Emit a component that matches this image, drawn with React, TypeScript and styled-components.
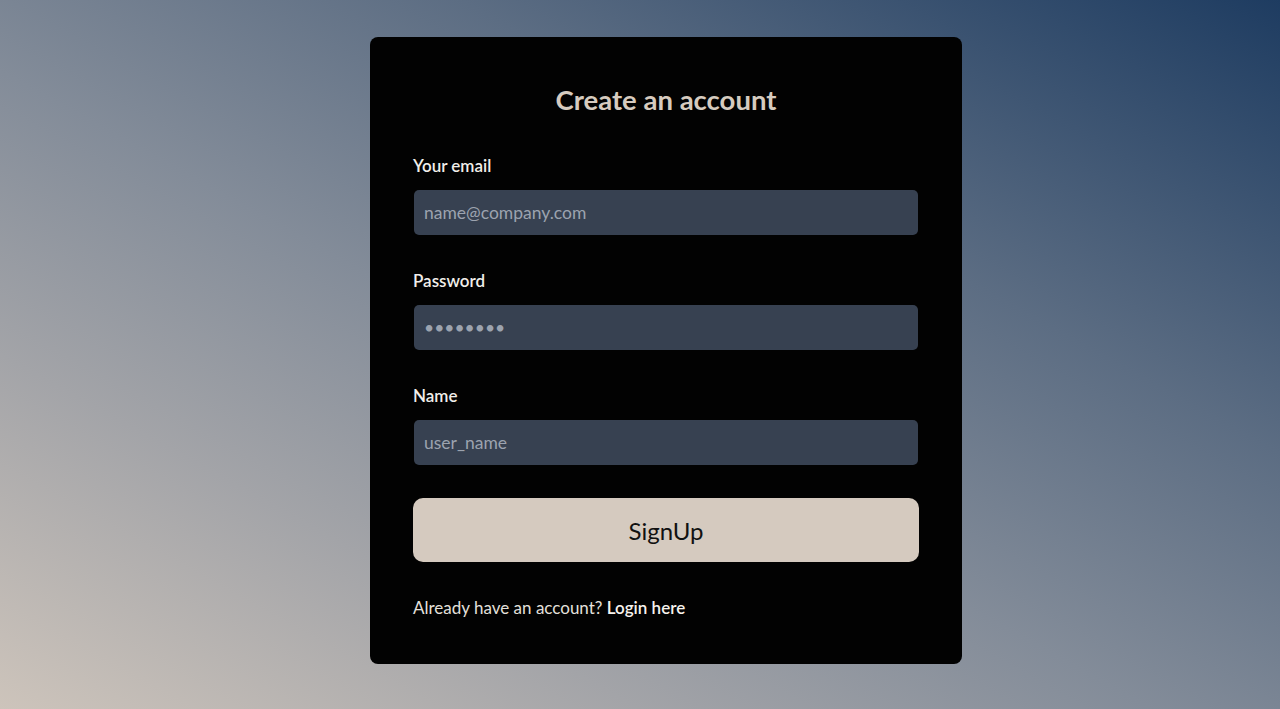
import React from 'react';
import styled, { createGlobalStyle } from 'styled-components';

const GlobalStyle = createGlobalStyle`
  * {
    box-sizing: border-box;
  }
  body {
    margin: 0;
    font-family: Lato, 'Open Sans', sans-serif;
  }
`;

interface FieldProps {
  label: string;
  type: string;
  placeholder: string;
}

const Field: React.FC<FieldProps> = ({ label, type, placeholder }) => {
  return (
    <FieldWrap>
      <Label>{label}</Label>
      <Input type={type} placeholder={placeholder} />
    </FieldWrap>
  );
};

export default function App() {
  return (
    <>
      <GlobalStyle />
      <Page>
        <Card>
          <Title>Create an account</Title>
          <Form onSubmit={(e) => e.preventDefault()}>
            <Field label="Your email" type="email" placeholder="name@company.com" />
            <Field label="Password" type="password" placeholder="••••••••" />
            <Field label="Name" type="text" placeholder="user_name" />
            <SubmitButton type="submit">SignUp</SubmitButton>
          </Form>
          <Footer>
            Already have an account? <LoginLink href="#">Login here</LoginLink>
          </Footer>
        </Card>
      </Page>
    </>
  );
}

const Page = styled.div`
  min-height: 100vh;
  width: 100%;
  display: flex;
  justify-content: center;
  align-items: flex-start;
  padding: 37px 0 0 52px;
  background: linear-gradient(
    to top right,
    #cdc4bb 0%,
    #a3a4a8 25%,
    #838c99 45%,
    #5c6d83 68%,
    #1e3c61 100%
  );
`;

const Card = styled.div`
  width: 592px;
  background: #020202;
  border-radius: 8px;
  padding: 46px 43px 46px 43px;
  display: flex;
  flex-direction: column;
`;

const Title = styled.h1`
  margin: 0 0 38px;
  text-align: center;
  font-size: 27.5px;
  line-height: 34px;
  font-weight: 700;
  color: #d6cbbf;
`;

const Form = styled.form`
  display: flex;
  flex-direction: column;
  gap: 35px;
`;

const FieldWrap = styled.div`
  display: flex;
  flex-direction: column;
  gap: 13px;
`;

const Label = styled.label`
  font-size: 17px;
  line-height: 22px;
  font-weight: 600;
  color: #f1eeea;
`;

const Input = styled.input`
  height: 45px;
  width: 504px;
  margin-left: 1px;
  border: none;
  outline: none;
  border-radius: 5px;
  background: #374151;
  padding: 0 10px;
  font-family: Lato, 'Open Sans', sans-serif;
  font-size: 17.5px;
  color: #e5e7eb;

  &::placeholder {
    color: #9ca3af;
  }
`;

const SubmitButton = styled.button`
  margin-top: -2px;
  height: 64px;
  width: 100%;
  border: none;
  border-radius: 10px;
  background: #d5cabf;
  color: #111;
  font-family: Lato, 'Open Sans', sans-serif;
  font-size: 24px;
  cursor: pointer;
`;

const Footer = styled.p`
  margin: 36px 0 0;
  font-size: 17px;
  line-height: 20px;
  color: #e4e0dc;
`;

const LoginLink = styled.a`
  color: #f7f3ee;
  font-weight: 600;
  text-decoration: none;
`;
